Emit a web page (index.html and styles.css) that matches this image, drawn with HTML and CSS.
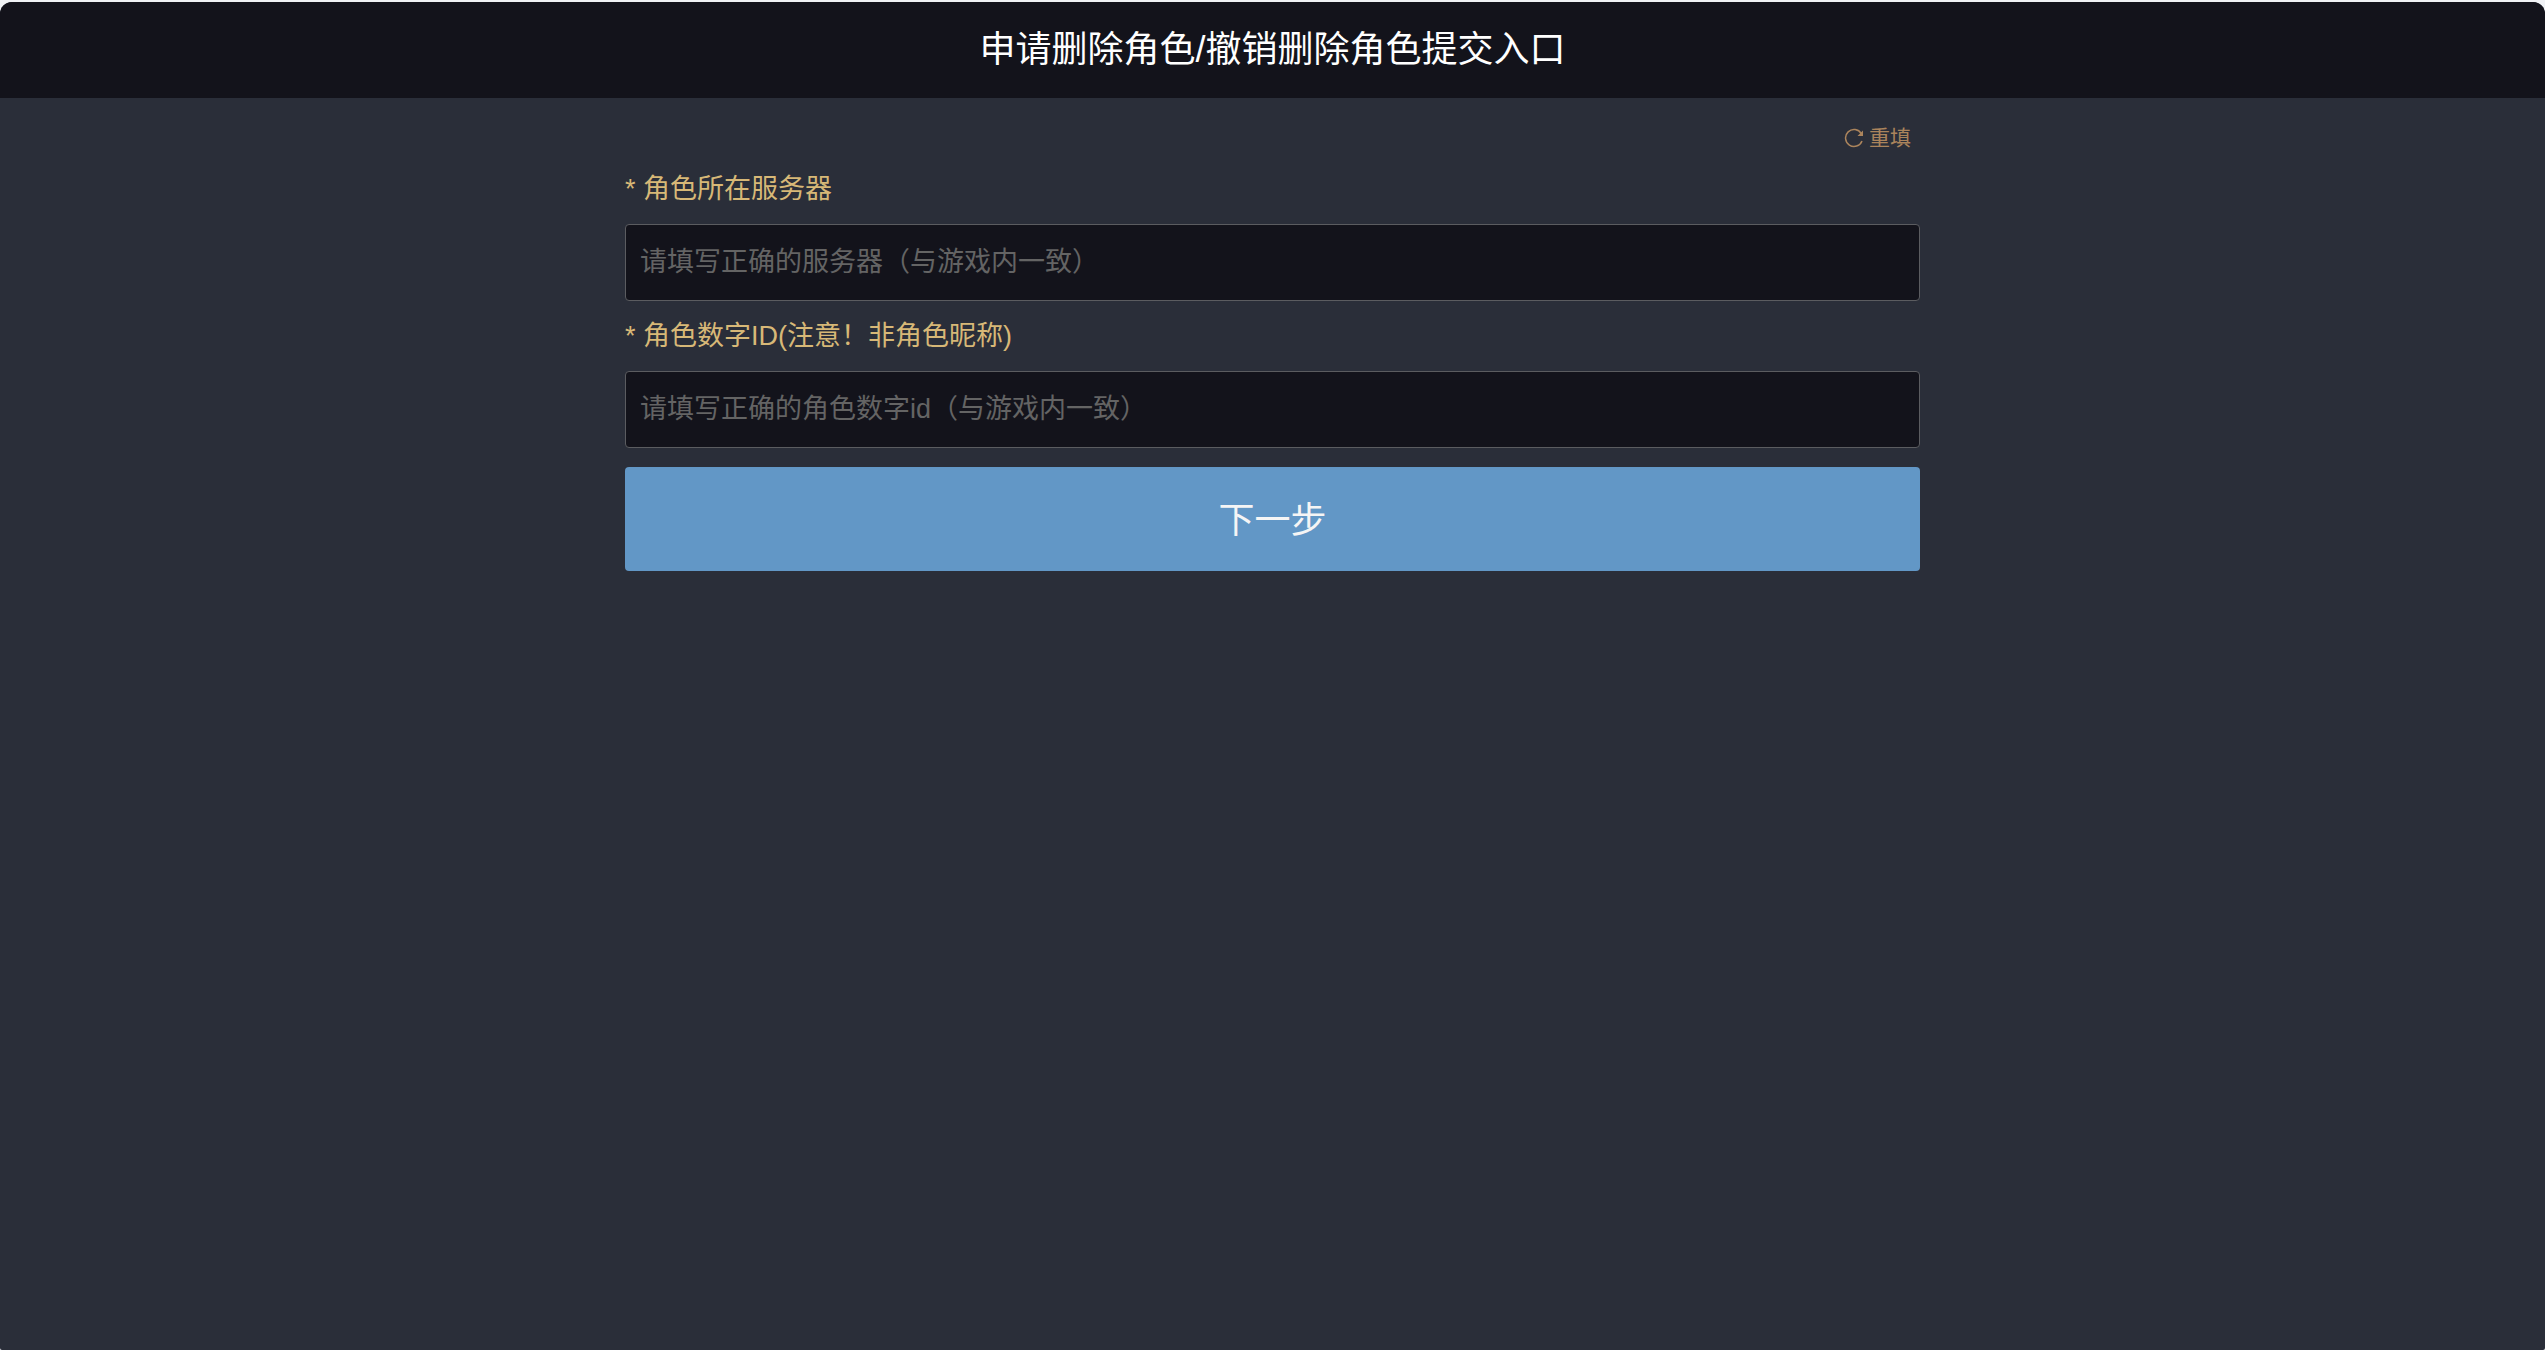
FILE: index.html
```
<!DOCTYPE html>
<html lang="zh-CN">
<head>
<meta charset="utf-8">
<meta name="viewport" content="width=device-width, initial-scale=1">
<title>申请删除角色/撤销删除角色提交入口</title>
<link rel="stylesheet" href="styles.css">
</head>
<body>
<div class="page">
  <header class="header">
    <h1 class="title">申请删除角色/撤销删除角色提交入口</h1>
  </header>
  <main class="main">
    <form class="form">
      <div class="toolbar">
        <button class="reset" type="reset">
          <svg class="reset-icon" viewBox="0 0 20 20" aria-hidden="true">
            <path d="M18 13A8.500 8.500 0 1 1 17.300 5.500" fill="none" stroke="currentColor" stroke-width="1.500"/>
            <path d="M19 2.500V8h-5.500z" fill="currentColor"/>
          </svg>
          <span>重填</span>
        </button>
      </div>
      <div class="field">
        <label class="label" for="server">* 角色所在服务器</label>
        <input class="input" id="server" type="text" placeholder="请填写正确的服务器（与游戏内一致）">
      </div>
      <div class="field">
        <label class="label" for="role-id">* 角色数字ID(注意！非角色昵称)</label>
        <input class="input" id="role-id" type="text" placeholder="请填写正确的角色数字id（与游戏内一致）">
      </div>
      <button class="submit" type="submit">下一步</button>
    </form>
  </main>
</div>
</body>
</html>
```
FILE: styles.css
```
* {
  box-sizing: border-box;
}

body {
  margin: 0;
  padding-top: 2px;
  min-height: 100vh;
  display: flex;
  background: #f0f2f5;
  font-family: "Liberation Sans", "Noto Sans CJK SC", sans-serif;
}

button,
input {
  font-family: inherit;
}

.page {
  flex: 1;
  min-width: 0;
  overflow: hidden;
  border-radius: 12px 12px 2px 2px;
  background: #2a2e39;
}

.header {
  padding: 24px 16px;
  background: #13131b;
}

.title {
  margin: 0;
  color: #fff;
  font-size: 36px;
  font-weight: 400;
  line-height: 48px;
  text-align: center;
}

.main {
  padding: 24px 16px;
}

.form {
  display: flex;
  flex-direction: column;
  gap: 19px;
  max-width: 1295px;
  margin: 0 auto;
}

.toolbar {
  display: flex;
  justify-content: flex-end;
  padding-right: 9px;
}

.reset {
  display: flex;
  align-items: center;
  gap: 5px;
  padding: 0;
  border: 0;
  background: none;
  color: #ab845c;
  font-size: 21px;
  line-height: 32px;
  cursor: pointer;
}

.reset-icon {
  width: 20px;
  height: 20px;
}

.field {
  display: flex;
  flex-direction: column;
  gap: 19px;
}

.label {
  color: #d7b877;
  font-size: 27px;
  line-height: 32px;
}

.input {
  width: 100%;
  height: 77px;
  padding: 0 14px;
  border: 1px solid #5b5c60;
  border-radius: 4px;
  background: #13131b;
  color: #fff;
  font-size: 27px;
}

.input::placeholder {
  color: #646464;
  opacity: 1;
}

.submit {
  height: 104px;
  padding: 0 16px 4px;
  border: 0;
  border-radius: 4px;
  background: #6297c6;
  color: #f5f5f5;
  font-size: 36px;
  cursor: pointer;
}
```
